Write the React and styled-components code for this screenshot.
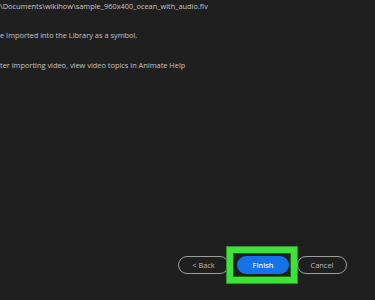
import React from "react";
import styled, { createGlobalStyle } from "styled-components";

const GlobalStyle = createGlobalStyle`
    html, body {
        margin: 0;
        padding: 0;
        background: #1f1f1f;
    }
`;

const Wrapper = styled.div`
    width: 375px;
    height: 300px;
    background: #1f1f1f;
    display: flex;
    flex-direction: column;
    font-family: "Open Sans", "Liberation Sans", sans-serif;
    overflow: hidden;
`;

const Info = styled.div`
    display: flex;
    flex-direction: column;
    padding-top: 1px;
    flex: 1;
`;

const Line = styled.div`
    color: #c4c4c4;
    font-size: 7.4px;
    line-height: 11px;
    white-space: nowrap;
    margin-top: ${(p) => p.gap || 0}px;
    padding-left: ${(p) => p.indent || 0}px;
`;

const Footer = styled.div`
    display: flex;
    flex-direction: row;
    justify-content: flex-end;
    gap: 8px;
    padding: 0 28px 26px 0;
`;

const PillButton = styled.div`
    position: relative;
    box-sizing: border-box;
    width: ${(p) => p.w || 51}px;
    height: 18px;
    border-radius: 9px;
    display: flex;
    align-items: center;
    justify-content: center;
    font-size: 7.4px;
    border: ${(p) => (p.primary ? "none" : "1.5px solid #9c9c9c")};
    background: ${(p) => (p.primary ? "#1473e6" : "transparent")};
    color: ${(p) => (p.primary ? "#eaf2ff" : "#bcbcbc")};
    font-weight: ${(p) => (p.primary ? 600 : 400)};
`;

const Highlight = styled.div`
    position: absolute;
    left: -10px;
    top: -9px;
    right: -8px;
    bottom: -9px;
    border: 6px solid #3fe23a;
    box-shadow: inset 0 0 0 1px #1c6e18, 0 0 0 1px #2a9a25;
    pointer-events: none;
`;

const App = () => {
    return (
        <Wrapper>
            <GlobalStyle />
            <Info>
                <Line>\Documents\wikihow\sample_960x400_ocean_with_audio.flv</Line>
                <Line gap={18}>e Imported into the Library as a symbol.</Line>
                <Line gap={19}>ter importing video, view video topics in Animate Help</Line>
            </Info>
            <Footer>
                <PillButton w={51}>&lt; Back</PillButton>
                <PillButton primary w={52}>
                    Finish
                    <Highlight />
                </PillButton>
                <PillButton w={50}>Cancel</PillButton>
            </Footer>
        </Wrapper>
    );
};

export default App;
